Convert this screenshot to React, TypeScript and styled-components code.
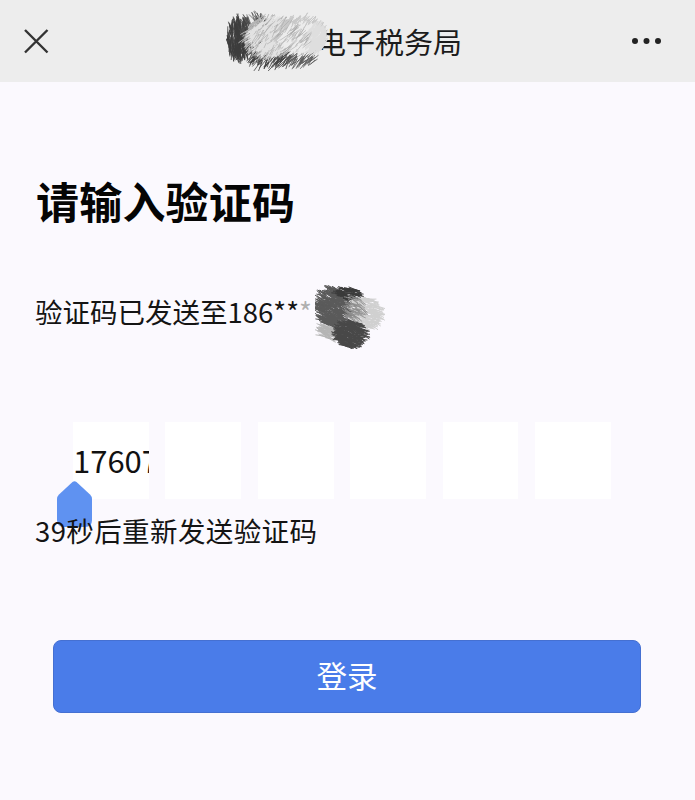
import React from "react";
import styled, { createGlobalStyle } from "styled-components";

const GlobalStyle = createGlobalStyle`
    html, body {
        margin: 0;
        padding: 0;
        background: #fbf9fe;
    }
`;

const Page = styled.div`
    width: 695px;
    height: 800px;
    overflow: hidden;
    background: #fbf9fe;
    color: #141414;
    font-family: "Noto Sans CJK SC", "Noto Sans", sans-serif;
`;

const TopBar = styled.header`
    position: relative;
    height: 82px;
    box-sizing: border-box;
    padding: 0 32px 0 23px;
    background: #ededed;
    display: flex;
    align-items: center;
    justify-content: space-between;
`;

const TopTitle = styled.h1`
    margin: 0;
    position: absolute;
    left: 317px;
    top: 20px;
    font-size: 29px;
    line-height: 42px;
    font-weight: 400;
    color: #1c1c1c;
    white-space: nowrap;
`;

const Main = styled.main`
    padding: 93px 0 0 36px;
`;

const Heading = styled.h2`
    margin: 0;
    font-size: 43px;
    line-height: 50px;
    font-weight: 700;
    letter-spacing: 0.2px;
    color: #050505;
`;

const SentLine = styled.div`
    position: relative;
    margin: 66px 0 0 -1px;
    font-size: 27.5px;
    line-height: 40px;
    white-space: nowrap;
`;

const FadedStar = styled.span`
    color: #b0b0b0;
`;

const CodeRow = styled.div`
    position: relative;
    display: flex;
    gap: 16.6px;
    margin: 91px 0 0 37px;
`;

const CodeCell = styled.div`
    width: 75.8px;
    height: 77px;
    overflow: hidden;
    background: #ffffff;
    font-size: 31px;
    line-height: 75px;
    white-space: nowrap;
    color: #111;
`;

const Handle = styled.svg`
    position: absolute;
    left: -16px;
    top: 59px;
    width: 35px;
    height: 46px;
`;

const Countdown = styled.div`
    position: relative;
    margin: 11px 0 0 -1px;
    font-size: 27.5px;
    line-height: 40px;
    letter-spacing: 0.4px;
`;

const LoginButton = styled.button`
    display: block;
    width: 588px;
    height: 73px;
    margin: 90px 0 0 17px;
    padding: 0 0 4px;
    border: 1px solid #4570d2;
    border-radius: 8px;
    background: #4a7ce9;
    color: #fff;
    font-family: inherit;
    font-size: 30.5px;
`;

const ScribbleSvg = styled.svg<{ $left: number; $top: number }>`
    position: absolute;
    left: ${(p) => p.$left}px;
    top: ${(p) => p.$top}px;
    pointer-events: none;
`;

interface Blob {
    cx: number;
    cy: number;
    rx: number;
    ry: number;
    color: string;
    count: number;
    angle: number;
    width: number;
}

// small seeded generator so the hatching stays the same on every render
function hatch(blobs: Blob[], seed: number) {
    let s = seed;
    const rnd = () => {
        s = (s * 16807) % 2147483647;
        return s / 2147483647;
    };
    return blobs.map((b) => {
        let d = "";
        for (let i = 0; i < b.count; i++) {
            const t = rnd() * 2 * Math.PI;
            const r = Math.sqrt(rnd());
            const x = b.cx + Math.cos(t) * r * b.rx;
            const y = b.cy + Math.sin(t) * r * b.ry;
            const len = 1.5 + rnd() * 6;
            const a = b.angle + (rnd() - 0.5) * 0.7;
            const dx = Math.cos(a) * len;
            const dy = Math.sin(a) * len;
            d += `M${(x - dx).toFixed(1)} ${(y - dy).toFixed(1)}L${(x + dx).toFixed(1)} ${(y + dy).toFixed(1)}`;
        }
        return { d, color: b.color, width: b.width };
    });
}

const titleBlobs: Blob[] = [
    { cx: 13, cy: 30, rx: 12, ry: 19, color: "#3c3c3c", count: 320, angle: 1.5, width: 0.8 },
    { cx: 30, cy: 22, rx: 14, ry: 16, color: "#4a4a4a", count: 160, angle: 1.1, width: 0.7 },
    { cx: 44, cy: 46, rx: 22, ry: 13, color: "#3f3f3f", count: 170, angle: 2.2, width: 0.8 },
    { cx: 76, cy: 50, rx: 14, ry: 7, color: "#5a5a5a", count: 70, angle: 2.3, width: 0.8 },
    { cx: 44, cy: 28, rx: 26, ry: 20, color: "#b4b4b4", count: 450, angle: 2.3, width: 1 },
    { cx: 46, cy: 28, rx: 22, ry: 17, color: "#e2e2e2", count: 420, angle: 2.3, width: 1.1 },
    { cx: 74, cy: 26, rx: 24, ry: 17, color: "#c8c8c8", count: 480, angle: 2.3, width: 1 },
    { cx: 74, cy: 29, rx: 19, ry: 13, color: "#ececec", count: 380, angle: 2.3, width: 1.1 },
    { cx: 90, cy: 30, rx: 9, ry: 14, color: "#dedede", count: 170, angle: 2.3, width: 1.1 },
    { cx: 56, cy: 30, rx: 28, ry: 16, color: "#a8a8a8", count: 90, angle: 2.3, width: 0.6 },
];

const phoneBlobs: Blob[] = [
    { cx: 49, cy: 28, rx: 17, ry: 15, color: "#d0d0d0", count: 280, angle: 0.3, width: 1 },
    { cx: 16, cy: 46, rx: 11, ry: 8, color: "#b4b4b4", count: 130, angle: 0.4, width: 0.9 },
    { cx: 17, cy: 22, rx: 15, ry: 19, color: "#5a5a5a", count: 420, angle: 0.4, width: 1 },
    { cx: 33, cy: 9, rx: 11, ry: 6, color: "#3a3a3a", count: 70, angle: 0.2, width: 1 },
    { cx: 35, cy: 49, rx: 14, ry: 13, color: "#484848", count: 340, angle: 0.3, width: 1 },
    { cx: 40, cy: 24, rx: 9, ry: 12, color: "#8c8c8c", count: 60, angle: 0.5, width: 0.8 },
];

function Scribble({ blobs, seed, left, top, width, height }: { blobs: Blob[]; seed: number; left: number; top: number; width: number; height: number }) {
    return (
        <ScribbleSvg $left={left} $top={top} width={width} height={height} viewBox={`0 0 ${width} ${height}`}>
            {hatch(blobs, seed).map((p, i) => (
                <path key={i} d={p.d} stroke={p.color} strokeWidth={p.width} fill="none" />
            ))}
        </ScribbleSvg>
    );
}

export default function App() {
    return (
        <Page>
            <GlobalStyle />
            <TopBar>
                <svg width="26" height="26" viewBox="0 0 26 26" fill="none" stroke="#333" strokeWidth="2.4">
                    <path d="M2 2 L24.5 24.5 M24.5 2 L2 24.5" />
                </svg>
                <TopTitle>电子税务局</TopTitle>
                <Scribble blobs={titleBlobs} seed={4711} left={226} top={9} width={102} height={62} />
                <svg width="32" height="8" viewBox="0 0 32 8" fill="#222">
                    <circle cx="4" cy="4" r="3" />
                    <circle cx="15.5" cy="4" r="3" />
                    <circle cx="27" cy="4" r="3" />
                </svg>
            </TopBar>
            <Main>
                <Heading>请输入验证码</Heading>
                <SentLine>
                    验证码已发送至186**<FadedStar>*</FadedStar>
                    <Scribble blobs={phoneBlobs} seed={921} left={280} top={-6} width={70} height={64} />
                </SentLine>
                <CodeRow>
                    <CodeCell>17607</CodeCell>
                    <CodeCell />
                    <CodeCell />
                    <CodeCell />
                    <CodeCell />
                    <CodeCell />
                    <Handle viewBox="0 0 35 46">
                        <path d="M15.5 1 Q17.5 -0.5 19.5 1 L33 13.5 Q35 15.5 35 18 V39 Q35 46 28 46 H7 Q0 46 0 39 V18 Q0 15.5 2 13.5 Z" fill="#5f92f1" />
                    </Handle>
                </CodeRow>
                <Countdown>39秒后重新发送验证码</Countdown>
                <LoginButton>登录</LoginButton>
            </Main>
        </Page>
    );
}
